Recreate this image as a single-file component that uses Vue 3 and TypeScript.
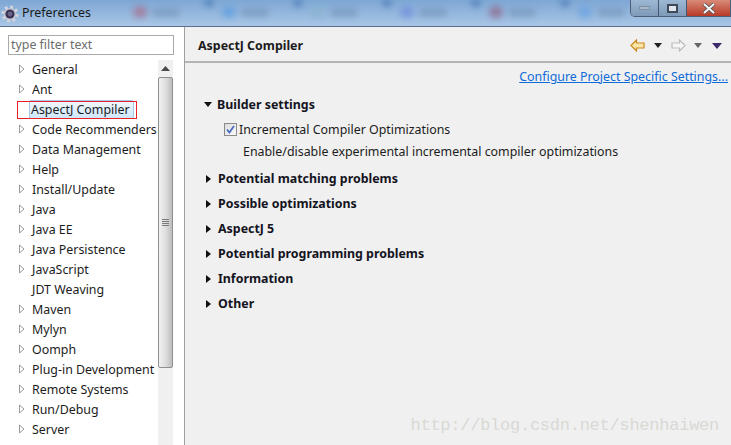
<script setup lang="ts">
const treeItems = [
  { label: 'General', arrow: true },
  { label: 'Ant', arrow: true },
  { label: 'AspectJ Compiler', arrow: false, selected: true },
  { label: 'Code Recommenders', arrow: true },
  { label: 'Data Management', arrow: true },
  { label: 'Help', arrow: true },
  { label: 'Install/Update', arrow: true },
  { label: 'Java', arrow: true },
  { label: 'Java EE', arrow: true },
  { label: 'Java Persistence', arrow: true },
  { label: 'JavaScript', arrow: true },
  { label: 'JDT Weaving', arrow: false },
  { label: 'Maven', arrow: true },
  { label: 'Mylyn', arrow: true },
  { label: 'Oomph', arrow: true },
  { label: 'Plug-in Development', arrow: true },
  { label: 'Remote Systems', arrow: true },
  { label: 'Run/Debug', arrow: true },
  { label: 'Server', arrow: true },
];

const collapsed = [
  'Potential matching problems',
  'Possible optimizations',
  'AspectJ 5',
  'Potential programming problems',
  'Information',
  'Other',
];

const blurTabs = ['#a5728f', '#5f9fe0', '#8ab4cc', '#6f8fdc', '#8f6a8c', '#6ba3e4'];
</script>

<template>
  <div class="window">
    <header class="titlebar">
      <svg class="app-icon" width="18" height="18" viewBox="0 0 18 18">
        <circle cx="9" cy="9" r="7" fill="none" stroke="#d4d4dc" stroke-width="3" stroke-dasharray="2.75 2.75" />
        <circle cx="9" cy="9" r="6" fill="#c9c9d2" />
        <circle cx="9" cy="9" r="4.6" fill="#3a3358" />
        <circle cx="9" cy="9" r="2.4" fill="#6a6488" />
      </svg>
      <span class="title">Preferences</span>
      <div class="blur-tabs">
        <span v-for="c in blurTabs" :key="c" class="blur-tab">
          <i :style="{ background: c }"></i>
          <b></b>
          <em></em>
        </span>
      </div>
      <div class="win-buttons">
        <span class="win-btn"><i class="min"></i></span>
        <span class="win-btn"><i class="max"></i></span>
        <span class="win-btn close">
          <svg width="14" height="11" viewBox="0 0 14 11">
            <path d="M2 1l10 9M12 1L2 10" stroke="#4a4a4a" stroke-width="3.6" />
            <path d="M2 1l10 9M12 1L2 10" stroke="#f4f4f4" stroke-width="2.2" />
          </svg>
        </span>
      </div>
    </header>

    <div class="body">
      <aside class="sidebar">
        <div class="filter">type filter text</div>
        <div class="tree-wrap">
          <ul class="tree">
            <li v-for="item in treeItems" :key="item.label" class="tree-row">
              <svg v-if="item.arrow" class="twisty" width="6" height="10" viewBox="0 0 6 10">
                <path d="M0.5 1l4.5 4-4.5 4z" fill="#fff" stroke="#9a9a9a" />
              </svg>
              <span v-else class="twisty"></span>
              <span class="tree-label" :class="{ selected: item.selected }">{{ item.label }}</span>
            </li>
          </ul>
          <div class="scrollbar">
            <div class="scroll-up">
              <svg width="9" height="5" viewBox="0 0 9 5"><path d="M0 5l4.5-5L9 5z" fill="#4a4a4a" /></svg>
            </div>
            <div class="scroll-thumb">
              <span class="grip"></span>
            </div>
          </div>
        </div>
        <span class="red-box"></span>
      </aside>

      <main class="content">
        <div class="page-head">
          <h1>AspectJ Compiler</h1>
          <div class="nav">
            <svg width="15" height="13" viewBox="0 0 15 13">
              <path d="M1 6.5L6.5 1v3h7.5v5H6.5v3z" fill="#fbe6a8" stroke="#c98a1c" stroke-width="1.2" />
            </svg>
            <i class="drop"></i>
            <svg class="next" width="15" height="13" viewBox="0 0 15 13">
              <path d="M14 6.5L8.5 1v3H1v5h7.5v3z" fill="#f6f6f6" stroke="#bdbdbd" stroke-width="1.2" />
            </svg>
            <i class="drop grey"></i>
            <i class="drop purple"></i>
          </div>
        </div>
        <div class="page-body">
          <a class="config-link">Configure Project Specific Settings...</a>

          <section class="section open">
            <div class="sec-head">
              <i class="tri-down"></i>
              <span>Builder settings</span>
            </div>
            <div class="check-row">
              <span class="checkbox">
                <svg width="9" height="9" viewBox="0 0 9 9">
                  <path d="M1 4.5l2.4 3L8 1" fill="none" stroke="#4a6cc0" stroke-width="1.8" />
                </svg>
              </span>
              <span>Incremental Compiler Optimizations</span>
            </div>
            <p class="hint">Enable/disable experimental incremental compiler optimizations</p>
          </section>

          <div v-for="name in collapsed" :key="name" class="sec-head closed">
            <i class="tri-right"></i>
            <span>{{ name }}</span>
          </div>
        </div>
        <span class="watermark">http://blog.csdn.net/shenhaiwen</span>
      </main>
    </div>
  </div>
</template>

<style scoped>
.window {
  width: 731px;
  height: 445px;
  overflow: hidden;
  display: flex;
  flex-direction: column;
  font-family: "Noto Sans", sans-serif;
  font-size: 12.4px;
  color: #1c1c1c;
  background: #f0f0f0;
}

.titlebar {
  height: 26px;
  flex: none;
  display: flex;
  align-items: center;
  padding-left: 1px;
  border-bottom: 1px solid #5a6f8f;
  background: linear-gradient(#7ea7d4, #a9c6e6);
  overflow: hidden;
}

.app-icon {
  flex: none;
  margin: 2px 3px 0 0;
}

.title {
  width: 111px;
  flex: none;
  margin-bottom: 2px;
  color: #1a1a1a;
}

.blur-tabs {
  display: flex;
  flex: 1;
  align-self: stretch;
  filter: blur(3px);
  min-width: 0;
  overflow: hidden;
}

.blur-tab {
  width: 89px;
  flex: none;
  display: flex;
  align-items: center;
  gap: 6px;
  padding-bottom: 2px;
  box-sizing: border-box;
}

.blur-tab i {
  width: 14px;
  height: 12px;
  border-radius: 6px;
  opacity: 0.75;
}

.blur-tab b {
  width: 26px;
  height: 7px;
  background: #6d8cae;
  opacity: 0.6;
}

.blur-tab em {
  width: 0;
  height: 0;
  align-self: flex-start;
  margin-left: 18px;
  border-left: 6px solid transparent;
  border-right: 6px solid transparent;
  border-top: 8px solid #4a7ab4;
}

.win-buttons {
  flex: none;
  display: flex;
  align-self: flex-start;
  height: 16px;
  border: 1px solid #4f5f78;
  border-top: none;
  border-radius: 0 0 0 5px;
  overflow: hidden;
}

.win-btn {
  width: 27px;
  display: flex;
  align-items: center;
  justify-content: center;
  background: linear-gradient(#9db8d4, #7f9ab8);
  border-right: 1px solid #46566e;
}

.win-btn .min {
  width: 11px;
  height: 4px;
  background: #a9b9c9;
  border: 1px solid #7e90a4;
  box-sizing: border-box;
}

.win-btn .max {
  width: 11px;
  height: 9px;
  background: #dfe6ee;
  border: 2px solid #3e4a5a;
  box-sizing: border-box;
}

.win-btn.close {
  width: 43px;
  border-right: none;
  background: linear-gradient(#d98a78, #b83a28);
}

.body {
  flex: 1;
  display: flex;
  min-height: 0;
}

.sidebar {
  width: 185px;
  flex: none;
  box-sizing: border-box;
  padding: 8px 10px 0 8px;
  background: #fff;
  border-right: 1px solid #a0a0a0;
  position: relative;
}

.filter {
  height: 20px;
  box-sizing: border-box;
  border: 1px solid #aaa;
  padding-left: 2px;
  line-height: 17px;
  color: #6d6d6d;
  width: 166px;
}

.tree-wrap {
  display: flex;
  margin-top: 5px;
  margin-right: -1px;
}

.tree {
  list-style: none;
  margin: -1px 0 0;
  padding: 0;
  width: 150px;
  flex: none;
  white-space: nowrap;
}

.tree-row {
  height: 20px;
  display: flex;
  align-items: center;
}

.twisty {
  width: 6px;
  flex: none;
  margin-left: 11px;
  margin-right: 5px;
}

.tree-label {
  padding: 0 2px;
  line-height: 17px;
}

.tree-label.selected {
  background: linear-gradient(#f1f8fe, #cfe6fc);
  border: 1px solid #a5c9ee;
  border-radius: 2px;
  padding: 0 3px 0 1px;
  margin-left: -1px;
}

.scrollbar {
  width: 15px;
  flex: none;
  height: 385px;
  background: #f0f0f0;
}

.scroll-up {
  height: 17px;
  display: flex;
  align-items: center;
  justify-content: center;
}

.scroll-thumb {
  height: 291px;
  box-sizing: border-box;
  border: 1px solid #8e8f8f;
  border-radius: 2px;
  background: linear-gradient(90deg, #f1f1f1, #dcdcdc 55%, #bcbcbc);
  display: flex;
  align-items: center;
  justify-content: center;
}

.grip {
  width: 7px;
  height: 7px;
  background: repeating-linear-gradient(#7a7a7a 0 1px, transparent 1px 2px);
}

.red-box {
  position: absolute;
  left: 17px;
  top: 74px;
  width: 118px;
  height: 16px;
  border: 1px solid #e8202a;
  pointer-events: none;
}

.content {
  flex: 1;
  min-width: 0;
  position: relative;
  background: #f0f0f0;
}

.page-head {
  height: 36px;
  box-sizing: border-box;
  border-bottom: 2px solid #b4b4b4;
  display: flex;
  align-items: center;
  justify-content: space-between;
  padding: 3px 9px 0 13px;
}

h1 {
  margin: 0;
  font-size: 12.4px;
  font-weight: 700;
  color: #1c1c1c;
}

.nav {
  display: flex;
  align-items: center;
}

.drop {
  width: 0;
  height: 0;
  border-left: 4px solid transparent;
  border-right: 4px solid transparent;
  border-top: 5px solid #222;
  margin-left: 9px;
}

.drop.grey {
  border-top-color: #666;
  margin-left: 8px;
}

.drop.purple {
  border-left-width: 5px;
  border-right-width: 5px;
  border-top: 6px solid #3d2a6e;
  margin-left: 10px;
}

.next {
  margin-left: 9px;
}

.page-body {
  display: flex;
  flex-direction: column;
  padding: 5px 3px 0 19px;
}

.config-link {
  align-self: flex-end;
  color: #0f6bd8;
  text-decoration: underline;
  line-height: 18px;
}

.section {
  margin-top: 8px;
}

.sec-head {
  height: 25px;
  display: flex;
  align-items: center;
  gap: 5px;
  font-weight: 700;
  color: #14141e;
}

.section .sec-head {
  height: 20px;
}

.tri-down {
  width: 0;
  height: 0;
  border-left: 4.5px solid transparent;
  border-right: 4.5px solid transparent;
  border-top: 5px solid #111;
}

.tri-right {
  width: 0;
  height: 0;
  border-top: 4.5px solid transparent;
  border-bottom: 4.5px solid transparent;
  border-left: 5px solid #111;
  margin: 0 2px;
}

.check-row {
  display: flex;
  align-items: center;
  gap: 2px;
  margin: 5px 0 0 20px;
  height: 20px;
}

.checkbox {
  width: 13px;
  height: 13px;
  box-sizing: border-box;
  border: 1px solid #8a8a8a;
  background: linear-gradient(135deg, #dcdcdc, #fafafa);
  display: flex;
  align-items: center;
  justify-content: center;
}

.hint {
  margin: 4px 0 5px 39px;
  height: 18px;
  line-height: 18px;
}

.watermark {
  position: absolute;
  right: 12px;
  bottom: 10px;
  font-family: "Liberation Mono", monospace;
  font-size: 17px;
  letter-spacing: -0.25px;
  color: #d9d9d5;
  pointer-events: none;
}
</style>
